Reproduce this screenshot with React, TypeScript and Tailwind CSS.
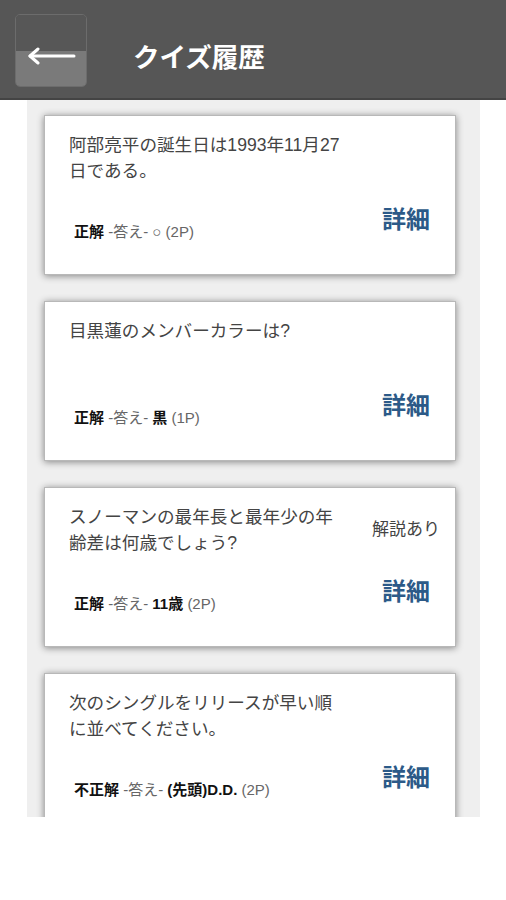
import React from "react";

const jp = { fontFamily: '"Liberation Sans", "Noto Sans CJK JP", sans-serif' };

type Item = {
  q: string;
  note?: string;
  result: string;
  answer: React.ReactNode;
  pts: string;
};

const items: Item[] = [
  { q: "阿部亮平の誕生日は1993年11月27日である。", result: "正解", answer: <span className="text-[#666]">○</span>, pts: "(2P)" },
  { q: "目黒蓮のメンバーカラーは?", result: "正解", answer: <span className="font-bold text-[#111]">黒</span>, pts: "(1P)" },
  { q: "スノーマンの最年長と最年少の年齢差は何歳でしょう?", note: "解説あり", result: "正解", answer: <span className="font-bold text-[#111]">11歳</span>, pts: "(2P)" },
  { q: "次のシングルをリリースが早い順に並べてください。", result: "不正解", answer: <span className="font-bold text-[#111]">(先頭)D.D.</span>, pts: "(2P)" },
];

function Card({ item }: { item: Item }) {
  return (
    <div className="flex h-[160px] shrink-0 flex-col border border-[#b8b8b8] bg-white pl-[24px] pr-[25px] pt-[16px] shadow-[0_1px_7px_rgba(0,0,0,0.45)]">
      <div className="flex items-start justify-between">
        <p className="w-[280px] text-[17.6px] leading-[26px] text-[#444]">{item.q}</p>
        {item.note && <span className="mr-[-10px] mt-[13px] text-[17px] leading-[26px] text-[#444]">{item.note}</span>}
      </div>
      <div className="mt-auto flex items-end justify-between pb-[32px]">
        <p className="ml-[5px] text-[15px] leading-[20px] text-[#666]">
          <span className="font-bold text-[#111]">{item.result}</span> -答え- {item.answer} {item.pts}
        </p>
        <span className="mb-[7px] text-[24px] font-bold leading-[30px] text-[#2c5a88]">詳細</span>
      </div>
    </div>
  );
}

export default function App() {
  return (
    <div className="h-[900px] w-[506px] bg-white" style={jp}>
      <header className="flex h-[100px] items-start border-b-2 border-[#444] bg-[#565656] pl-[15px] pt-[14px]">
        <button className="relative flex h-[73px] w-[72px] flex-col overflow-hidden rounded-[5px] border border-[#6c6c6c]">
          <div className="h-[36px] bg-[#575757]" />
          <div className="h-[36px] bg-[#7a7a7a]" />
          <svg className="absolute left-[12px] top-[32px]" width="48" height="18" viewBox="0 0 48 18">
            <path d="M2 9 H46" stroke="white" strokeWidth="3" strokeLinecap="round" />
            <path d="M10 2 L2 9 L10 16" stroke="white" strokeWidth="3" fill="none" strokeLinecap="round" strokeLinejoin="round" />
          </svg>
        </button>
        <h1 className="ml-[46px] mt-[28px] text-[26.5px] font-bold leading-[32px] text-white">クイズ履歴</h1>
      </header>
      <main className="ml-[27px] flex h-[717px] w-[453px] flex-col gap-[26px] overflow-hidden bg-[#efefef] pl-[17px] pr-[24px] pt-[15px]">
        {items.map((it, i) => (
          <Card key={i} item={it} />
        ))}
      </main>
    </div>
  );
}
